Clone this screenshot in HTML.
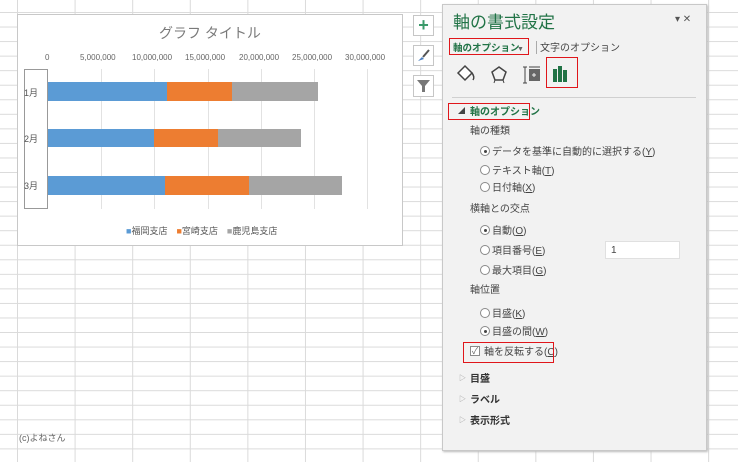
<!DOCTYPE html>
<html><head><meta charset="utf-8"><style>
*{margin:0;padding:0;box-sizing:border-box}
body{width:738px;height:462px;overflow:hidden;position:relative;background:#fff;font-family:"Liberation Sans","Noto Sans CJK JP",sans-serif;}
.grid{position:absolute;inset:0;background-image:linear-gradient(to right,#dadada 1px,transparent 1px),linear-gradient(to bottom,#dadada 1px,transparent 1px);background-size:57.6px 100%,100% 14.55px;background-position:17px 0,0 12px;}
.a{position:absolute}
.t{position:absolute;white-space:nowrap;line-height:12px;padding-top:2px}
.red{position:absolute;border:1.5px solid #e0161b}
.rad{position:absolute;width:10px;height:10px;border:1px solid #8a8a8a;border-radius:50%;background:#fff}
.rad.on::after{content:"";position:absolute;left:2.5px;top:2.5px;width:3px;height:3px;border-radius:50%;background:#444}
.p{font-size:10px;color:#444}
.tri{position:absolute;font-size:7px;color:#999;line-height:8px}
</style></head><body>
<div class="grid"></div>
<div class="a" style="left:17px;top:14px;width:386px;height:232px;background:#fff;border:1px solid #c8c8c8"></div>
<div class="t" style="left:0;width:420px;text-align:center;top:23px;font-size:14px;line-height:16px;color:#7a7a7a">グラフ タイトル</div>
<div class="t" style="left:45px;top:50px;font-size:8px;color:#666">0</div>
<div class="t" style="left:80px;top:50px;font-size:8px;color:#666">5,000,000</div>
<div class="t" style="left:132px;top:50px;font-size:8px;color:#666">10,000,000</div>
<div class="t" style="left:185px;top:50px;font-size:8px;color:#666">15,000,000</div>
<div class="t" style="left:239px;top:50px;font-size:8px;color:#666">20,000,000</div>
<div class="t" style="left:292px;top:50px;font-size:8px;color:#666">25,000,000</div>
<div class="t" style="left:345px;top:50px;font-size:8px;color:#666">30,000,000</div>
<div class="a" style="left:101px;top:69px;width:1px;height:140px;background:#e2e2e2"></div>
<div class="a" style="left:154px;top:69px;width:1px;height:140px;background:#e2e2e2"></div>
<div class="a" style="left:208px;top:69px;width:1px;height:140px;background:#e2e2e2"></div>
<div class="a" style="left:261px;top:69px;width:1px;height:140px;background:#e2e2e2"></div>
<div class="a" style="left:314px;top:69px;width:1px;height:140px;background:#e2e2e2"></div>
<div class="a" style="left:367px;top:69px;width:1px;height:140px;background:#e2e2e2"></div>
<div class="a" style="left:24px;top:69px;width:24px;height:140px;border:1px solid #999"></div>
<div class="t" style="left:24px;top:85px;font-size:9px;color:#555">1月</div>
<div class="t" style="left:24px;top:131px;font-size:9px;color:#555">2月</div>
<div class="t" style="left:24px;top:178px;font-size:9px;color:#555">3月</div>
<div class="a" style="left:48px;top:82px;width:119px;height:19px;background:#5b9bd5"></div>
<div class="a" style="left:167px;top:82px;width:65px;height:19px;background:#ed7d31"></div>
<div class="a" style="left:232px;top:82px;width:86px;height:19px;background:#a5a5a5"></div>
<div class="a" style="left:48px;top:129px;width:106px;height:18px;background:#5b9bd5"></div>
<div class="a" style="left:154px;top:129px;width:64px;height:18px;background:#ed7d31"></div>
<div class="a" style="left:218px;top:129px;width:83px;height:18px;background:#a5a5a5"></div>
<div class="a" style="left:48px;top:176px;width:117px;height:19px;background:#5b9bd5"></div>
<div class="a" style="left:165px;top:176px;width:84px;height:19px;background:#ed7d31"></div>
<div class="a" style="left:249px;top:176px;width:93px;height:19px;background:#a5a5a5"></div>
<div class="t" style="left:126px;top:223px;font-size:9px;color:#555"><span style="color:#5b9bd5">■</span>福岡支店　<span style="color:#ed7d31">■</span>宮崎支店　<span style="color:#a5a5a5">■</span>鹿児島支店</div>
<div class="a" style="left:413px;top:15px;width:21px;height:21px;border:1px solid #c6c6c6;background:#fff;color:#3a9a6a;font-size:18px;font-weight:bold;text-align:center;line-height:19px">+</div>
<div class="a" style="left:413px;top:45px;width:21px;height:21px;border:1px solid #c6c6c6;background:#fff"><svg width="19" height="19"><path d="M4 15 L8 11 L10 13 Z" fill="#4a7ec0"/><path d="M9 11 L15 4" stroke="#555" stroke-width="2"/></svg></div>
<div class="a" style="left:413px;top:75px;width:21px;height:22px;border:1px solid #c6c6c6;background:#fff"><svg width="19" height="20"><path d="M3 4 H16 L11 10 V16 H8 V10 Z" fill="#777"/></svg></div>
<div class="t" style="left:19px;top:430px;font-size:9px;color:#666">(c)よねさん</div>
<!-- panel -->
<div class="a" style="left:442px;top:4px;width:265px;height:447px;background:#f2f2f2;border:1px solid #c8c8c8;box-shadow:1px 1px 2px #bbb"></div>
<div class="t" style="left:453px;top:11px;font-size:17px;line-height:20px;color:#217346">軸の書式設定</div>
<div class="t" style="left:675px;top:12px;font-size:10px;color:#555">▾ ✕</div>
<div class="t" style="left:453px;top:41px;font-size:9.5px;color:#217346;font-weight:bold">軸のオプション</div>
<div class="t" style="left:517px;top:42px;font-size:7px;color:#666">▼</div>
<div class="red" style="left:449px;top:38px;width:80px;height:17px"></div>
<div class="a" style="left:536px;top:41px;width:1px;height:13px;background:#aaa"></div>
<div class="t" style="left:540px;top:41px;font-size:10px;color:#444">文字のオプション</div>
<svg class="a" style="left:455px;top:62px" width="120" height="26">
<path d="M3 11 L10 4 L17 11 L10 18 Z" fill="#fff" stroke="#444" stroke-width="1.5"/><path d="M17 11 Q20 15 18 18" fill="none" stroke="#444" stroke-width="1.5"/>
<path d="M44 5 L51 10 L48 18 L40 18 L37 10 Z" fill="none" stroke="#444" stroke-width="1.5"/><path d="M40 18 L39 21 M48 18 L49 21" stroke="#444"/>
<rect x="74" y="7" width="11" height="12" fill="#666"/><path d="M70 5 V21 M68 5 H72 M68 21 H72 M74 5 H85" stroke="#444"/><path d="M79 11 v4 M77 13 h4" stroke="#eee"/>
<rect x="98" y="7" width="4" height="13" fill="#217346"/><rect x="103" y="4" width="4" height="16" fill="#217346"/><rect x="108" y="8" width="4" height="12" fill="#217346"/>
</svg>
<div class="red" style="left:546px;top:57px;width:32px;height:31px"></div>
<div class="a" style="left:452px;top:97px;width:244px;height:1px;background:#d0d0d0"></div>
<div class="tri" style="left:458px;top:108px;color:#444">◢</div>
<div class="t" style="left:470px;top:105px;font-size:10px;color:#217346;font-weight:bold">軸のオプション</div>
<div class="red" style="left:448px;top:103px;width:82px;height:17px"></div>
<div class="t p" style="left:470px;top:124px">軸の種類</div>
<div class="rad on" style="left:480px;top:146px"></div><div class="t p" style="left:492px;top:145px">データを基準に自動的に選択する(<u>Y</u>)</div>
<div class="rad" style="left:480px;top:165px"></div><div class="t p" style="left:492px;top:164px">テキスト軸(<u>T</u>)</div>
<div class="rad" style="left:480px;top:182px"></div><div class="t p" style="left:492px;top:181px">日付軸(<u>X</u>)</div>
<div class="t p" style="left:470px;top:202px">横軸との交点</div>
<div class="rad on" style="left:480px;top:225px"></div><div class="t p" style="left:492px;top:224px">自動(<u>O</u>)</div>
<div class="rad" style="left:480px;top:245px"></div><div class="t p" style="left:492px;top:244px">項目番号(<u>E</u>)</div>
<div class="a" style="left:605px;top:241px;width:75px;height:18px;background:#fff;border:1px solid #e0e0e0;font-size:10px;line-height:12px;color:#444;padding:3px 0 0 5px">1</div>
<div class="rad" style="left:480px;top:265px"></div><div class="t p" style="left:492px;top:264px">最大項目(<u>G</u>)</div>
<div class="t p" style="left:470px;top:283px">軸位置</div>
<div class="rad" style="left:480px;top:308px"></div><div class="t p" style="left:492px;top:307px">目盛(<u>K</u>)</div>
<div class="rad on" style="left:480px;top:326px"></div><div class="t p" style="left:492px;top:325px">目盛の間(<u>W</u>)</div>
<div class="a" style="left:470px;top:346px;width:10px;height:10px;border:1px solid #8a8a8a;background:#fff;font-size:9px;line-height:8px;color:#666;text-align:center">✓</div>
<div class="t p" style="left:484px;top:345px">軸を反転する(<u>C</u>)</div>
<div class="red" style="left:463px;top:342px;width:91px;height:21px"></div>
<div class="tri" style="left:459px;top:375px">▷</div><div class="t" style="left:470px;top:372px;font-size:10px;color:#333;font-weight:bold">目盛</div>
<div class="tri" style="left:459px;top:396px">▷</div><div class="t" style="left:470px;top:393px;font-size:10px;color:#333;font-weight:bold">ラベル</div>
<div class="tri" style="left:459px;top:417px">▷</div><div class="t" style="left:470px;top:414px;font-size:10px;color:#333;font-weight:bold">表示形式</div>
</body></html>
